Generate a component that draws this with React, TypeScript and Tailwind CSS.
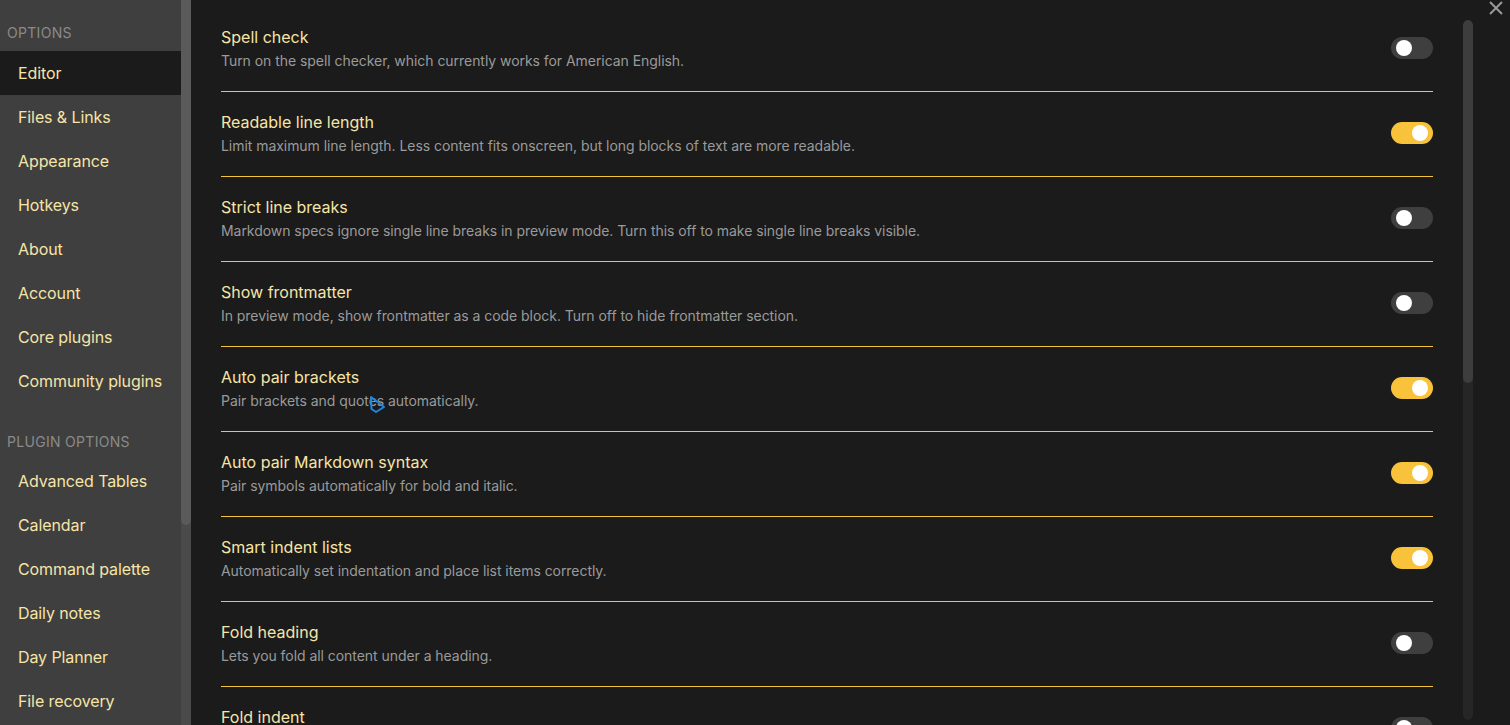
import React from "react";

const core = ["Editor", "Files & Links", "Appearance", "Hotkeys", "About", "Account", "Core plugins", "Community plugins"];
const plugins = ["Advanced Tables", "Calendar", "Command palette", "Daily notes", "Day Planner", "File recovery"];

const settings = [
  { title: "Spell check", desc: "Turn on the spell checker, which currently works for American English.", on: false },
  { title: "Readable line length", desc: "Limit maximum line length. Less content fits onscreen, but long blocks of text are more readable.", on: true },
  { title: "Strict line breaks", desc: "Markdown specs ignore single line breaks in preview mode. Turn this off to make single line breaks visible.", on: false },
  { title: "Show frontmatter", desc: "In preview mode, show frontmatter as a code block. Turn off to hide frontmatter section.", on: false },
  { title: "Auto pair brackets", desc: "Pair brackets and quotes automatically.", on: true },
  { title: "Auto pair Markdown syntax", desc: "Pair symbols automatically for bold and italic.", on: true },
  { title: "Smart indent lists", desc: "Automatically set indentation and place list items correctly.", on: true },
  { title: "Fold heading", desc: "Lets you fold all content under a heading.", on: false },
  { title: "Fold indent", desc: "Lets you fold part of an indentation.", on: false },
];

function Toggle({ on }: { on: boolean }) {
  return (
    <div
      className={
        "w-[42px] h-[22px] rounded-full flex items-center px-[5px] shrink-0 " +
        (on ? "bg-[#f8c33a] justify-end" : "bg-[#3f3f3f] justify-start")
      }
    >
      <div className="w-[16px] h-[16px] rounded-full bg-white" />
    </div>
  );
}

export default function App() {
  return (
    <div
      className="relative flex w-[1510px] h-[725px] overflow-hidden bg-[#1b1b1b]"
      style={{ fontFamily: "Inter, 'Noto Sans', sans-serif" }}
    >
      {/* sidebar */}
      <div className="flex shrink-0 h-full">
        <div className="w-[181px] h-full bg-[#3f3f3f] pt-[24px]">
          <div className="px-[7px] h-[18px] text-[14px] leading-[18px] text-[#8a8a8a] uppercase tracking-[0.3px]">
            Options
          </div>
          <div className="mt-[9px]">
            {core.map((c, i) => (
              <div
                key={c}
                className={
                  "h-[44px] flex items-center pl-[18px] text-[16px] tracking-[-0.1px] text-[#f6e5a8] " +
                  (i === 0 ? "bg-[#1b1b1b]" : "")
                }
              >
                {c}
              </div>
            ))}
          </div>
          <div className="px-[7px] mt-[30px] h-[18px] text-[14px] leading-[18px] text-[#8a8a8a] uppercase tracking-[0.3px]">
            Plugin Options
          </div>
          <div className="mt-[8px]">
            {plugins.map((c) => (
              <div key={c} className="h-[44px] flex items-center pl-[18px] text-[16px] tracking-[-0.1px] text-[#f6e5a8]">
                {c}
              </div>
            ))}
          </div>
        </div>
        <div className="w-[10px] h-full bg-[#4a4a4a]">
          <div className="h-[525px] bg-[#5a5a5a] rounded-b-full" />
        </div>
      </div>

      {/* main */}
      <div className="flex-1 flex h-full pl-[30px] pr-[37px]">
        <div className="flex-1 pt-[7px]">
          {settings.map((s) => (
            <div
              key={s.title}
              className="flex items-center justify-between pt-[18px] pb-[20px] border-b border-[#f5c33b]"
            >
              <div>
                <div className="text-[16px] leading-[24px] text-[#f6e5a8]">{s.title}</div>
                <div className="mt-[2px] text-[14px] leading-[20px] tracking-[-0.05px] text-[#9a9a9a]">{s.desc}</div>
              </div>
              <Toggle on={s.on} />
            </div>
          ))}
        </div>
        <div className="w-[10px] ml-[30px] mt-[20px] h-[700px] rounded-full bg-[#262626] overflow-hidden">
          <div className="h-[363px] bg-[#3d3d3d] rounded-full" />
        </div>
      </div>

      {/* close */}
      <div className="absolute right-[4px] top-[-2px] text-[#9a9a9a]">
        <svg width="20" height="20" viewBox="0 0 20 20" fill="none" stroke="currentColor" strokeWidth="2">
          <path d="M4 4 L16 16 M16 4 L4 16" />
        </svg>
      </div>

      {/* mouse cursor */}
      <div className="absolute left-[369px] top-[395px]">
        <svg width="18" height="20" viewBox="0 0 18 20" fill="none" stroke="#1e88e5" strokeWidth="2" strokeLinejoin="round">
          <path d="M2 2 L2.5 14 L7 17 L15 12 Z" />
        </svg>
      </div>
    </div>
  );
}
